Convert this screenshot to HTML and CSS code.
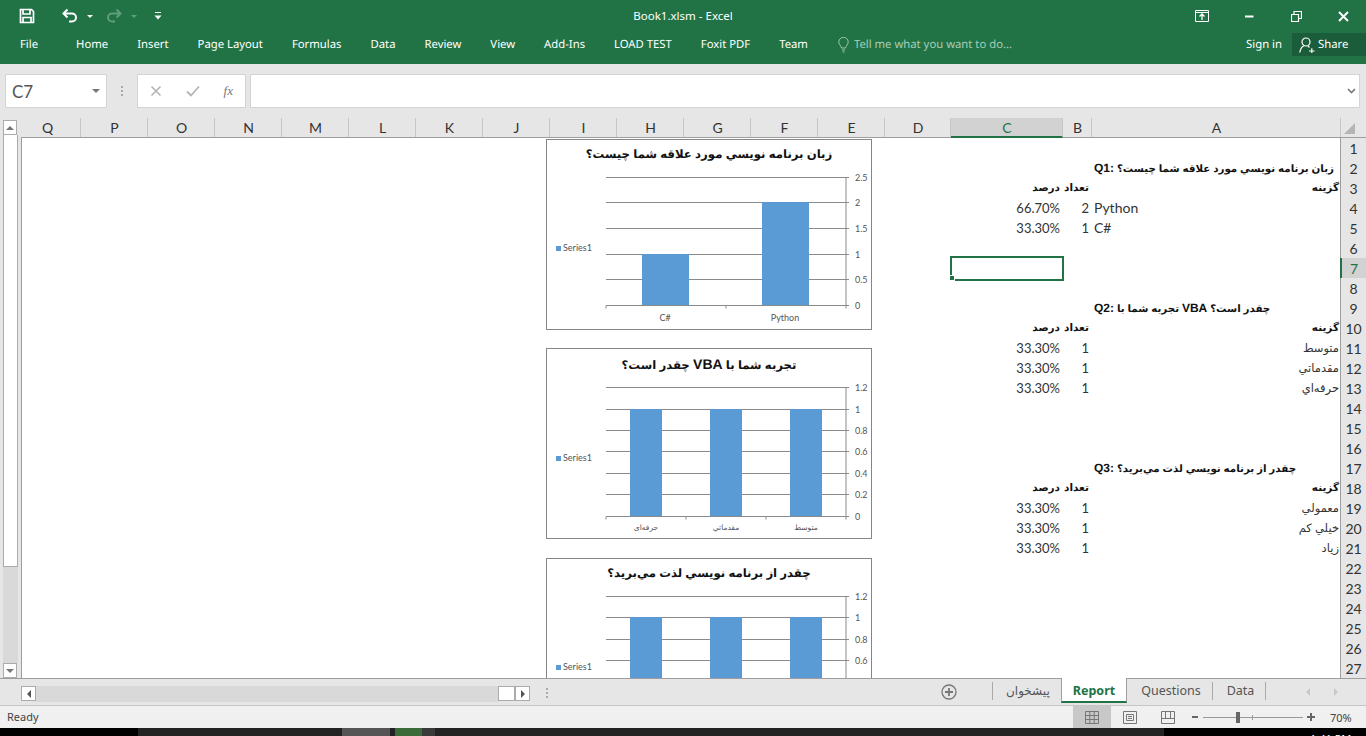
FILE: index.html
```html
<!DOCTYPE html>
<html lang="en">
<head>
<meta charset="utf-8">
<title>Book1.xlsm - Excel</title>
<link rel="stylesheet" href="styles.css">
</head>
<body>
<header class="ribbon">
  <div class="titlebar">
    <div class="qat">
      <svg class="ico save" width="16" height="16" viewBox="0 0 16 16"><path d="M1.500 1.500h11l2 2v11h-13z M4 2v4h7V2 M4 14.500v-5h8v5" fill="none" stroke="#fff" stroke-width="1.700"/></svg>
      <svg class="ico undo" width="16" height="16" viewBox="0 0 16 16"><path d="M5.500 1.500 1.500 5.500l4 4M2 5.500h8a4 4 0 0 1 0 8H7" fill="none" stroke="#fff" stroke-width="2"/></svg>
      <span class="caret"></span>
      <svg class="ico redo" width="16" height="16" viewBox="0 0 16 16"><path d="M10.500 1.500l4 4-4 4M14 5.500H6a4 4 0 0 0 0 8h3" fill="none" stroke="#5f9d7d" stroke-width="2"/></svg>
      <span class="caret dim"></span>
      <svg class="ico custom" width="8" height="10" viewBox="0 0 8 10"><path d="M1 1.500h6" stroke="#fff" stroke-width="1"/><path d="M0.500 4.500h7L4 8.500z" fill="#fff"/></svg>
    </div>
    <div class="doc-title">Book1.xlsm - Excel</div>
    <div class="winctl">
      <svg width="14" height="12" viewBox="0 0 14 12"><path d="M.5.500h13v11H.500zM.5 2.500h13" fill="none" stroke="#fff"/><path d="M7 10V5M4.500 6.500 7 4l2.500 2.500" fill="none" stroke="#fff" stroke-width="1.300"/></svg>
      <svg width="10" height="10" viewBox="0 0 10 10"><path d="M1 5.500h8.500" stroke="#fff" stroke-width="2"/></svg>
      <svg width="11" height="11" viewBox="0 0 11 11"><path d="M.5 3.500h7v7h-7zM3 3.500V.5h7.500v7h-3" fill="none" stroke="#fff" stroke-width="1.200"/></svg>
      <svg width="11" height="11" viewBox="0 0 11 11"><path d="M1 1l9 9M10 1l-9 9" stroke="#fff" stroke-width="2"/></svg>
    </div>
  </div>
  <nav class="tabs">
    <span class="tab file">File</span>
    <span class="tab">Home</span>
    <span class="tab">Insert</span>
    <span class="tab">Page Layout</span>
    <span class="tab">Formulas</span>
    <span class="tab">Data</span>
    <span class="tab">Review</span>
    <span class="tab">View</span>
    <span class="tab">Add-Ins</span>
    <span class="tab">LOAD TEST</span>
    <span class="tab">Foxit PDF</span>
    <span class="tab">Team</span>
    <span class="tell">
      <svg width="11" height="16" viewBox="0 0 11 16"><path d="M3.500 11C3 8.500.8 7.500.8 5a4.700 4.700 0 0 1 9.400 0c0 2.500-2.200 3.500-2.700 6zM4 13h3M4.500 15h2" fill="none" stroke="#9cc7ae" stroke-width="1"/></svg>
      Tell me what you want to do...
    </span>
    <span class="signin">Sign in</span>
    <span class="share">
      <svg width="16" height="16" viewBox="0 0 16 16"><circle cx="7" cy="5" r="4" fill="none" stroke="#fff" stroke-width="1.200"/><path d="M.8 15.500c.6-3.500 2.500-6 4-6.500M9 9l1.500 1.500M10 14h5.500M12.800 11.300v5.400" fill="none" stroke="#fff" stroke-width="1.200"/></svg>
      Share
    </span>
  </nav>
</header>

<section class="formula">
  <div class="namebox"><span>C7</span><i class="caret gray"></i></div>
  <div class="vdots"></div>
  <div class="fbtns">
    <svg width="12" height="12" viewBox="0 0 12 12"><path d="M1.500 1.500l9 9M10.500 1.500l-9 9" stroke="#b4b4b4" stroke-width="1.600"/></svg>
    <svg width="14" height="12" viewBox="0 0 14 12"><path d="M1 6.500l4 4 8-9" fill="none" stroke="#b4b4b4" stroke-width="1.800"/></svg>
    <span class="fx">fx</span>
  </div>
  <div class="finput">
    <svg width="9" height="6" viewBox="0 0 9 6"><path d="M1 1l3.500 3.500L8 1" fill="none" stroke="#777" stroke-width="1.600"/></svg>
  </div>
</section>

<main class="workspace">
  <aside class="vscroll">
    <div class="sbtn"><i class="tri up"></i></div>
    <div class="vthumb"></div>
    <div class="vtrack"></div>
    <div class="sbtn"><i class="tri down"></i></div>
  </aside>
  <div class="sheet">
    <div class="colhead">
      <span class="ch cq">Q</span><span class="ch">P</span><span class="ch">O</span><span class="ch">N</span><span class="ch">M</span><span class="ch">L</span><span class="ch">K</span><span class="ch">J</span><span class="ch">I</span><span class="ch">H</span><span class="ch">G</span><span class="ch">F</span><span class="ch">E</span>
      <span class="ch cd">D</span><span class="ch cc">C</span><span class="ch cb">B</span><span class="ch ca">A</span>
      <span class="corner"><i></i></span>
    </div>
    <div class="rows">
      <div class="row"><span class="rh">1</span></div>
      <div class="row"><span class="A q"><b class="ql">Q1:</b> زبان برنامه نويسي مورد علاقه شما چيست؟</span><span class="rh">2</span></div>
      <div class="row"><span class="C fa-b">درصد</span><span class="B fa-b">تعداد</span><span class="A fa-b end">گزينه</span><span class="rh">3</span></div>
      <div class="row"><span class="C num">66.70%</span><span class="B num">2</span><span class="A txt">Python</span><span class="rh">4</span></div>
      <div class="row"><span class="C num">33.30%</span><span class="B num">1</span><span class="A txt">C#</span><span class="rh">5</span></div>
      <div class="row"><span class="rh">6</span></div>
      <div class="row"><span class="C sel"></span><span class="rh cur">7</span></div>
      <div class="row"><span class="rh">8</span></div>
      <div class="row"><span class="A q"><b class="ql">Q2:</b> تجربه شما با <b class="ql">VBA</b> چقدر است؟</span><span class="rh">9</span></div>
      <div class="row"><span class="C fa-b">درصد</span><span class="B fa-b">تعداد</span><span class="A fa-b end">گزينه</span><span class="rh">10</span></div>
      <div class="row"><span class="C num">33.30%</span><span class="B num">1</span><span class="A fa end">متوسط</span><span class="rh">11</span></div>
      <div class="row"><span class="C num">33.30%</span><span class="B num">1</span><span class="A fa end">مقدماتي</span><span class="rh">12</span></div>
      <div class="row"><span class="C num">33.30%</span><span class="B num">1</span><span class="A fa end">حرفه‌اي</span><span class="rh">13</span></div>
      <div class="row"><span class="rh">14</span></div>
      <div class="row"><span class="rh">15</span></div>
      <div class="row"><span class="rh">16</span></div>
      <div class="row"><span class="A q"><b class="ql">Q3:</b> چقدر از برنامه نويسي لذت مي‌بريد؟</span><span class="rh">17</span></div>
      <div class="row"><span class="C fa-b">درصد</span><span class="B fa-b">تعداد</span><span class="A fa-b end">گزينه</span><span class="rh">18</span></div>
      <div class="row"><span class="C num">33.30%</span><span class="B num">1</span><span class="A fa end">معمولي</span><span class="rh">19</span></div>
      <div class="row"><span class="C num">33.30%</span><span class="B num">1</span><span class="A fa end">خيلي كم</span><span class="rh">20</span></div>
      <div class="row"><span class="C num">33.30%</span><span class="B num">1</span><span class="A fa end">زياد</span><span class="rh">21</span></div>
      <div class="row"><span class="rh">22</span></div>
      <div class="row"><span class="rh">23</span></div>
      <div class="row"><span class="rh">24</span></div>
      <div class="row"><span class="rh">25</span></div>
      <div class="row"><span class="rh">26</span></div>
      <div class="row"><span class="rh">27</span></div>

      <figure class="chart ch1">
        <figcaption>زبان برنامه نويسي مورد علاقه شما چيست؟</figcaption>
        <svg width="324" height="159" viewBox="0 -4 324 159">
          <g class="grid"><path d="M59 3.500h240M59 28.500h240M59 54.500h240M59 80.500h240M59 105.500h240M59 131.500h240M299 3.500v128M299 3.500h3M299 28.500h3M299 54.500h3M299 80.500h3M299 105.500h3M299 131.500h3M59 131.500v3M179 131.500v3M299 131.500v3"/></g>
          <rect class="bar" x="95" y="80" width="47" height="51"/><rect class="bar" x="215" y="28" width="47" height="103"/>
          <rect class="bar" x="9" y="72" width="5" height="5"/><text class="lab" x="16" y="77">Series1</text>
          <g class="lab"><text x="308" y="6.500">2.5</text><text x="308" y="31.500">2</text><text x="308" y="57.500">1.5</text><text x="308" y="83.500">1</text><text x="308" y="108.500">0.5</text><text x="308" y="134.500">0</text></g>
          <g class="lab mid"><text x="118" y="147">C#</text><text x="238" y="147">Python</text></g>
        </svg>
      </figure>

      <figure class="chart ch2">
        <figcaption>تجربه شما با <b class="vba">VBA</b> چقدر است؟</figcaption>
        <svg width="324" height="159" viewBox="0 -4 324 159">
          <g class="grid"><path d="M59 4.500h240M59 26.500h240M59 47.500h240M59 68.500h240M59 90.500h240M59 111.500h240M59 133.500h240M299 4.500v129M299 4.500h3M299 26.500h3M299 47.500h3M299 68.500h3M299 90.500h3M299 111.500h3M299 133.500h3M59 133.500v3M139 133.500v3M219 133.500v3M299 133.500v3"/></g>
          <rect class="bar" x="83" y="26" width="32" height="107"/><rect class="bar" x="163" y="26" width="32" height="107"/><rect class="bar" x="243" y="26" width="32" height="107"/>
          <rect class="bar" x="9" y="73" width="5" height="5"/><text class="lab" x="16" y="78">Series1</text>
          <g class="lab"><text x="308" y="7.500">1.2</text><text x="308" y="29.500">1</text><text x="308" y="50.500">0.8</text><text x="308" y="71.500">0.6</text><text x="308" y="93.500">0.4</text><text x="308" y="114.500">0.2</text><text x="308" y="136.500">0</text></g>
          <g class="lab mid fa-lab"><text x="99" y="147">حرفه‌ای</text><text x="179" y="147">مقدماتي</text><text x="259" y="147">متوسط</text></g>
        </svg>
      </figure>

      <figure class="chart ch3">
        <figcaption>چقدر از برنامه نويسي لذت مي‌بريد؟</figcaption>
        <svg width="324" height="159" viewBox="0 -4 324 159">
          <g class="grid"><path d="M59 3.500h240M59 24.500h240M59 46.500h240M59 67.500h240M59 89.500h240M59 110.500h240M59 132.500h240M299 3.500v129M299 3.500h3M299 24.500h3M299 46.500h3M299 67.500h3M299 89.500h3M299 110.500h3M299 132.500h3"/></g>
          <rect class="bar" x="83" y="24" width="32" height="108"/><rect class="bar" x="163" y="24" width="32" height="108"/><rect class="bar" x="243" y="24" width="32" height="108"/>
          <rect class="bar" x="9" y="72" width="5" height="5"/><text class="lab" x="16" y="77">Series1</text>
          <g class="lab"><text x="308" y="6.500">1.2</text><text x="308" y="27.500">1</text><text x="308" y="49.500">0.8</text><text x="308" y="70.500">0.6</text></g>
        </svg>
      </figure>
    </div>
  </div>
</main>

<section class="sheetbar">
  <div class="hscroll">
    <div class="hbtn"><i class="tri left"></i></div>
    <div class="htrack"></div>
    <div class="hthumb"></div>
    <div class="hbtn"><i class="tri right"></i></div>
  </div>
  <div class="hdots"></div>
  <svg class="addsheet" width="16" height="16" viewBox="0 0 16 16"><circle cx="8" cy="8" r="7" fill="none" stroke="#777" stroke-width="1.300"/><path d="M8 4v8M4 8h8" stroke="#777" stroke-width="1.800"/></svg>
  <div class="sheettabs">
    <span class="stab fa-tab">پیشخوان</span>
    <span class="stab active">Report</span>
    <span class="stab">Questions</span>
    <span class="stab last">Data</span>
  </div>
  <div class="tabnav"><i class="tri left faint"></i><i class="tri right faint"></i></div>
</section>

<footer class="status">
  <span class="ready">Ready</span>
  <div class="views">
    <span class="view on"><svg width="14" height="13" viewBox="0 0 14 13"><path d="M.5.500h13v12H.500zM.5 4.500h13M.5 8.500h13M4.800.5v12M9.200.5v12" fill="none" stroke="#777"/></svg></span>
    <span class="view"><svg width="14" height="13" viewBox="0 0 14 13"><path d="M.5.500h13v12H.500zM3.500 3.500h7v6h-7zM5 5.500h4M5 7.500h4" fill="none" stroke="#777"/></svg></span>
    <span class="view"><svg width="14" height="13" viewBox="0 0 14 13"><path d="M.5.500h13v12H.500zM.5 7.500h13M4.500.5v7M9.500.5v7" fill="none" stroke="#777"/></svg></span>
  </div>
  <div class="zoom">
    <i class="zminus"></i>
    <div class="slider"><i class="zmid"></i><i class="zthumb"></i></div>
    <i class="zplus"></i>
    <span class="zpct">70%</span>
  </div>
</footer>

<div class="taskbar">
  <i class="tk k1"></i><i class="tk k2"></i><i class="tk k3"></i><i class="tk k4"></i><i class="tk k5"></i><i class="tk k6"></i><i class="tk k7"></i>
  <span class="clock">1:41 PM</span>
</div>
</body>
</html>
```
FILE: styles.css
```css
* { box-sizing: border-box; }
html, body { margin: 0; padding: 0; }
body {
  width: 1366px; height: 736px; overflow: hidden;
  display: flex; flex-direction: column;
  font-family: "Noto Sans", "DejaVu Sans", sans-serif;
  background: #e6e6e6; color: #333;
}
i { display: block; }

/* ribbon */
.ribbon { height: 64px; background: #217346; color: #fff; flex: none; }
.titlebar { height: 32px; display: grid; grid-template-columns: 1fr auto 1fr; align-items: center; }
.qat { display: flex; align-items: center; padding-left: 19px; }
.save { margin-right: 27px; }
.caret { width: 0; height: 0; border: 3px solid transparent; border-top: 3px solid #fff; border-bottom: 0; margin-left: 9px; }
.caret.dim { border-top-color: #5f9d7d; }
.redo { margin-left: 13px; }
.undo { margin-top: -1px; }
.custom { margin-left: 17px; }
.doc-title { font-size: 11.500px; color: #fff; line-height: 32px; }
.winctl { display: flex; align-items: center; justify-content: flex-end; padding-right: 17px; }
.winctl svg:nth-child(1) { margin-right: 35px; }
.winctl svg:nth-child(2) { margin-right: 37px; }
.winctl svg:nth-child(3) { margin-right: 36px; }
.tabs { height: 32px; display: flex; align-items: flex-start; gap: 29px; padding-left: 20px; font-size: 11.300px; text-rendering: geometricPrecision; }
.tab { line-height: 25px; white-space: nowrap; }
.file { margin-right: 9px; }
.tell { display: flex; align-items: center; gap: 5px; line-height: 25px; color: #a6cdb6; margin-left: 1px; white-space: nowrap; }
.signin { margin-left: auto; line-height: 25px; margin-right: -19px; }
.share { width: 74px; height: 23px; margin-top: 1px; background: #1b5d3a; display: flex; align-items: center; gap: 3px; padding-left: 7px; }

/* formula bar */
.formula { height: 54px; flex: none; display: flex; align-items: flex-start; padding: 10px 6px 0 5px; }
.namebox { width: 102px; height: 34px; background: #fff; border: 1px solid #d4d4d4; display: flex; align-items: center; justify-content: space-between; padding: 0 6px; font: 17px "Lato", sans-serif; color: #555; }
.caret.gray { border-top-color: #777; border-width: 4px 4px 0; margin: 0; }
.vdots { width: 2px; height: 11px; margin: 12px 14px 0 14px; background: repeating-linear-gradient(#aaa 0 2px, transparent 2px 4px); }
.fbtns { width: 109px; height: 34px; background: #fff; border: 1px solid #d4d4d4; display: flex; align-items: center; justify-content: space-between; padding: 0 12px; margin-right: 4px; }
.fx { font: italic 13px "Liberation Serif", serif; color: #777; }
.finput { flex: 1; height: 34px; background: #fff; border: 1px solid #d4d4d4; display: flex; align-items: center; justify-content: flex-end; padding-right: 3px; }

/* workspace */
.workspace { height: 560px; flex: none; display: flex; }
.vscroll { width: 21px; flex: none; display: flex; flex-direction: column; padding: 2px 3px 0; }
.sbtn { width: 14px; height: 15px; background: #fff; border: 1px solid #ababab; display: flex; align-items: center; justify-content: center; flex: none; }
.vthumb { height: 432px; flex: none; background: #fff; border: 1px solid #ababab; border-top: 0; }
.vtrack { flex: 1; background: #d9d9d9; }
.tri { width: 0; height: 0; border: 4px solid transparent; }
.tri.up { border-bottom-color: #777; border-top: 0; }
.tri.down { border-top-color: #777; border-bottom: 0; }
.tri.left { border-right-color: #555; border-left: 0; }
.tri.right { border-left-color: #555; border-right: 0; }
.tri.faint.left { border-right-color: #c8c8c8; }
.tri.faint.right { border-left-color: #c8c8c8; }

.sheet { width: 1345px; display: flex; flex-direction: column; }
.colhead { height: 20px; display: flex; border-bottom: 1px solid #9e9e9e; font: 14px/20px "Lato", sans-serif; color: #333; flex: none; }
.ch { width: 67px; text-align: center; border-right: 1px solid #c6c6c6; flex: none; height: 19px; line-height: 19px; padding-left: 1px; }
.cq { width: 60px; padding: 0 6px 0 0; }
.cd { width: 66px; }
.cc { width: 112px; background: #d2d2d2; color: #217346; border-bottom: 2px solid #217346; height: 20px; }
.cb { width: 29px; }
.ca { width: 248px; border-right: 0; }
.corner { width: 26px; border-left: 1px solid #c6c6c6; height: 19px; }
.corner i { width: 0; height: 0; margin: 5px 0 0 3px; border-left: 11px solid transparent; border-bottom: 11px solid #b5b5b5; }

.rows { flex: 1; position: relative; overflow: hidden; background: #fff; border-left: 1px solid #9e9e9e; }
.row { height: 20px; display: grid; grid-template-columns: 929px 112px 29px 248px 26px; color: #333; font: 14px/20px "Lato", sans-serif; }
.C { grid-column: 2; }
.B { grid-column: 3; }
.A { grid-column: 4; }
.rh { grid-column: 5; background: #e6e6e6; border-left: 1px solid #9e9e9e; border-bottom: 1px solid #bdbdbd; text-align: center; font-size: 14px; line-height: 21px; color: #333; }
.rh.cur { background: #d2d2d2; color: #217346; border-left: 2px solid #217346; }
.num { text-align: right; padding-right: 3px; font-size: 13px; }
.txt { padding-left: 2px; }
.q { font: bold 10.300px/20px "Liberation Sans", "DejaVu Sans", sans-serif; color: #111; white-space: nowrap; padding-left: 2px; text-rendering: geometricPrecision; }
.ql { font-size: 12px; }
.fa-b { font: bold 10.500px/20px "Liberation Sans", "DejaVu Sans", sans-serif; color: #111; direction: rtl; white-space: nowrap; padding-right: 3px; text-rendering: geometricPrecision; }
.fa { font: 11.500px/20px "Liberation Sans", "DejaVu Sans", sans-serif; direction: rtl; white-space: nowrap; padding-right: 1px; color: #333; }
.end { padding-right: 1px; }
.sel { position: relative; margin-top: -1px; outline: 2px solid #217346; outline-offset: -1px; z-index: 1; }
.sel::after { content: ""; position: absolute; left: -2px; bottom: -1px; width: 4px; height: 4px; background: #217346; border: 1px solid #fff; box-sizing: content-box; }

.chart { position: absolute; left: 524px; width: 326px; height: 191px; margin: 0; background: #fff; border: 1px solid #868686; }
.ch1 { top: 1px; }
.ch2 { top: 210px; }
.ch3 { top: 420px; }
figcaption { height: 30px; text-align: center; direction: rtl; font: bold 11.700px/30px "Liberation Sans", "DejaVu Sans", sans-serif; color: #111; text-rendering: geometricPrecision; }
.vba { font-size: 14px; }
.chart svg { display: block; }
.grid path { fill: none; stroke: #8a8a8a; stroke-width: 1; }
.bar { fill: #5b9bd5; }
.lab { font: 9px "Lato", sans-serif; fill: #555; }
.mid { text-anchor: middle; }
.fa-lab { font: 7.500px "DejaVu Sans", sans-serif; direction: rtl; }

/* sheet tabs */
.sheetbar { height: 28px; flex: none; border-top: 1px solid #9e9e9e; border-bottom: 1px solid #c6c6c6; display: flex; background: #e6e6e6; font-size: 12.500px; }
.hscroll { display: flex; margin: 7px 0 0 21px; height: 16px; }
.hbtn { width: 15px; height: 15px; background: #fff; border: 1px solid #ababab; display: flex; align-items: center; justify-content: center; }
.htrack { width: 462px; background: #d9d9d9; }
.hthumb { width: 17px; background: #fff; border: 1px solid #ababab; height: 15px; }
.hdots { width: 2px; height: 11px; margin: 9px 0 0 16px; background: repeating-linear-gradient(#aaa 0 2px, transparent 2px 4px); }
.addsheet { margin: 5px 0 0 393px; }
.sheettabs { display: flex; margin-left: 35px; height: 24px; align-items: stretch; }
.stab { padding: 0 12px 0 14px; line-height: 23px; color: #555; position: relative; white-space: nowrap; }
.stab::after { content: ""; position: absolute; right: 0; top: 3px; height: 18px; width: 1px; background: #aaa; }
.fa-tab { font: 12px "DejaVu Sans", sans-serif; padding: 0 11px 0 13px; border-left: 1px solid #aaa; margin: 3px 0; line-height: 18px; }
.fa-tab::after { display: none; }
.active { background: #fff; color: #217346; font-weight: 700; border-left: 1px solid #9e9e9e; border-right: 1px solid #9e9e9e; border-bottom: 2px solid #217346; margin-top: -1px; height: 25px; line-height: 25px; padding: 0 11px; }
.active::after { display: none; }
.tabnav { margin-left: auto; display: flex; gap: 24px; padding: 9px 28px 0 0; }

/* status */
.status { height: 22px; flex: none; background: #f0f0f0; display: flex; align-items: center; font-size: 11px; color: #444; padding-left: 7px; }
.ready { margin-top: -2px; }
.views { display: flex; margin-left: auto; height: 22px; }
.view { width: 38px; display: flex; align-items: center; justify-content: center; }
.view.on { background: #c8c8c8; }
.zoom { display: flex; align-items: center; margin-left: 5px; }
.zminus { width: 6px; height: 2px; background: #666; }
.slider { width: 100px; height: 1px; background: #9a9a9a; margin: 0 4px 0 5px; position: relative; }
.zmid { position: absolute; left: 49px; top: -2px; width: 1px; height: 5px; background: #9a9a9a; }
.zthumb { position: absolute; left: 33px; top: -5px; width: 4px; height: 11px; background: #666; }
.zplus { width: 8px; height: 8px; background: linear-gradient(#666, #666) center / 8px 2px no-repeat, linear-gradient(#666, #666) center / 2px 8px no-repeat; }
.zpct { width: 51px; padding-left: 15px; }

/* taskbar */
.taskbar { height: 8px; flex: none; background: #000; display: flex; overflow: hidden; }
.tk { height: 8px; }
.k1 { width: 138px; background: #000; }
.k2 { width: 204px; background: #232323; }
.k3 { width: 48px; background: #555; }
.k4 { width: 5px; background: #232323; }
.k5 { width: 27px; background: #3b6b38; }
.k6 { width: 13px; background: #3a3a3a; }
.k7 { width: 729px; background: #232323; }
.clock { margin-left: 146px; color: #fff; font-size: 11px; line-height: 15px; height: 8px; margin-top: 3px; white-space: nowrap; }
```
